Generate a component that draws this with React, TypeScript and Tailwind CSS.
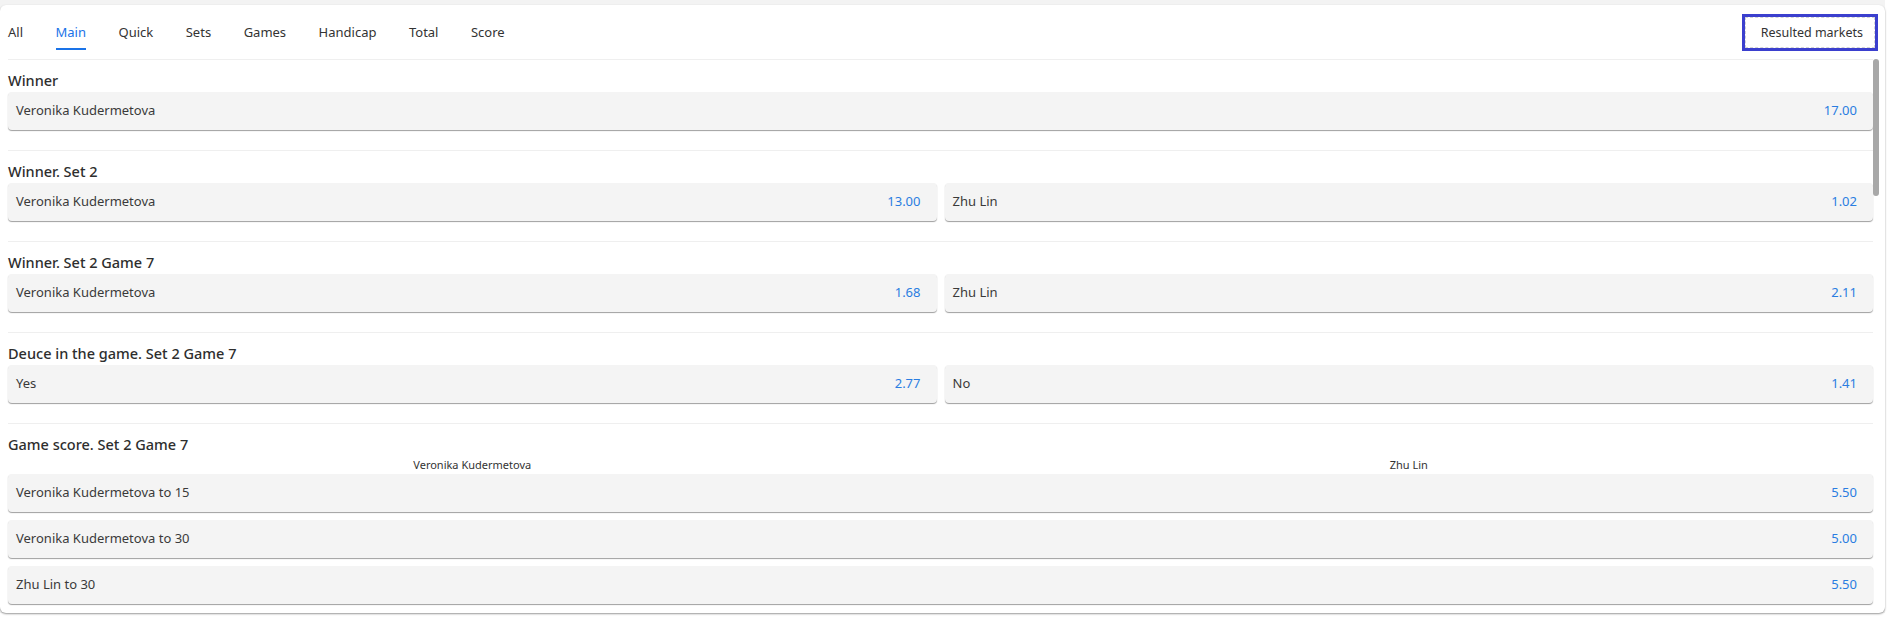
import React from "react";

type Outcome = { name: string; odd: string };
type Market = { title: string; outcomes: Outcome[]; columns?: string[]; list?: boolean };

const tabs = ["All", "Main", "Quick", "Sets", "Games", "Handicap", "Total", "Score"];

const markets: Market[] = [
  { title: "Winner", outcomes: [{ name: "Veronika Kudermetova", odd: "17.00" }] },
  {
    title: "Winner. Set 2",
    outcomes: [
      { name: "Veronika Kudermetova", odd: "13.00" },
      { name: "Zhu Lin", odd: "1.02" },
    ],
  },
  {
    title: "Winner. Set 2 Game 7",
    outcomes: [
      { name: "Veronika Kudermetova", odd: "1.68" },
      { name: "Zhu Lin", odd: "2.11" },
    ],
  },
  {
    title: "Deuce in the game. Set 2 Game 7",
    outcomes: [
      { name: "Yes", odd: "2.77" },
      { name: "No", odd: "1.41" },
    ],
  },
  {
    title: "Game score. Set 2 Game 7",
    columns: ["Veronika Kudermetova", "Zhu Lin"],
    list: true,
    outcomes: [
      { name: "Veronika Kudermetova to 15", odd: "5.50" },
      { name: "Veronika Kudermetova to 30", odd: "5.00" },
      { name: "Zhu Lin to 30", odd: "5.50" },
    ],
  },
];

function OddCell({ o }: { o: Outcome }) {
  return (
    <div className="h-[38px] flex items-center justify-between pl-2 pr-4 bg-[#f4f4f4] rounded-[4px] shadow-[0_1px_1px_rgba(0,0,0,0.38)] text-[13px] text-[#3a3a3a]">
      <span>{o.name}</span>
      <span className="text-[#2a7de1]">{o.odd}</span>
    </div>
  );
}

function MarketBlock({ m }: { m: Market }) {
  return (
    <div className="border-t border-[#efefef] pt-[9px] pb-[20px]">
      <div className="h-[23px] leading-[22px] text-[14.5px] font-medium text-[#2e2e2e]">{m.title}</div>
      {m.columns && (
        <div className="grid grid-cols-2 gap-2 h-[18px] items-center text-[11px] text-[#333] text-center">
          {m.columns.map((c) => (
            <span key={c}>{c}</span>
          ))}
        </div>
      )}
      {m.list ? (
        <div className="flex flex-col gap-2">
          {m.outcomes.map((o) => (
            <OddCell key={o.name} o={o} />
          ))}
        </div>
      ) : (
        <div className={m.outcomes.length > 1 ? "grid grid-cols-2 gap-2" : "grid grid-cols-1"}>
          {m.outcomes.map((o) => (
            <OddCell key={o.name} o={o} />
          ))}
        </div>
      )}
    </div>
  );
}

export default function App() {
  return (
    <div className="w-[1900px] h-[619px] bg-white overflow-hidden font-['Noto_Sans','Open_Sans',sans-serif]">
      <div className="w-[1885px] bg-[#f3f3f3] pt-[5px]">
        <div className="relative h-[608px] bg-white rounded-[6px] shadow-[0_1px_2px_rgba(0,0,0,0.4)] flex flex-col">
          {/* tab bar */}
          <div className="h-[54px] shrink-0 flex items-start justify-between pt-[9px] pl-2 pr-[7px]">
            <div className="flex gap-[32.5px]">
              {tabs.map((t) => (
                <div
                  key={t}
                  className={
                    t === "Main"
                      ? "h-[36px] pt-[3px] flex items-center border-b-2 border-[#1a73e8] text-[13px] text-[#1a73e8]"
                      : "h-[36px] pt-[3px] flex items-center border-b-2 border-transparent text-[13px] text-[#333]"
                  }
                >
                  {t}
                </div>
              ))}
            </div>
            <div className="h-[37px] border-[3px] border-[#3b3fce] flex items-center">
              <div className="h-full flex items-center pt-[2px] pl-[15px] pr-[11px] border border-dashed border-[#d4d4d4] text-[12.5px] text-[#333]">
                Resulted markets
              </div>
            </div>
          </div>

          {/* market list */}
          <div className="flex-1 overflow-hidden pl-2 pr-3">
            {markets.map((m) => (
              <MarketBlock key={m.title} m={m} />
            ))}
          </div>

          {/* scrollbar thumb */}
          <div className="absolute top-[54px] right-[6px] w-[6px] h-[137px] rounded-full bg-[#a8a8a8]" />
        </div>
      </div>
    </div>
  );
}
